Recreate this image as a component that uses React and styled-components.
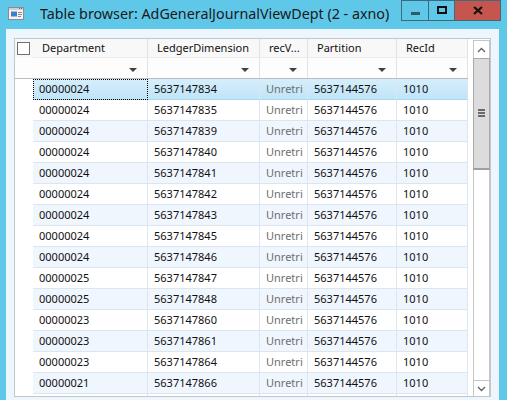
import styled, { createGlobalStyle } from "styled-components";

const GlobalStyle = createGlobalStyle`
  html, body {
    margin: 0;
    padding: 0;
    background: #5fc8e9;
  }
  * {
    box-sizing: border-box;
  }
`;

const Window = styled.div`
  width: 507px;
  height: 400px;
  background: #5fc8e9;
  display: flex;
  flex-direction: column;
  font-family: "Noto Sans", "Open Sans", sans-serif;
  overflow: hidden;
`;

const TitleBar = styled.div`
  height: 29px;
  display: flex;
  align-items: flex-start;
  padding: 0 6px 0 8px;
  flex-shrink: 0;
`;

const TitleIcon = styled.svg`
  margin-top: 7px;
  flex-shrink: 0;
`;

const Title = styled.div`
  margin-left: 16px;
  margin-top: 4px;
  font-size: 14.3px;
  color: #1a1a1a;
  white-space: nowrap;
  flex: 1;
`;

const Controls = styled.div`
  display: flex;
  height: 21px;
`;

const ControlButton = styled.div`
  width: ${(p) => p.$w}px;
  height: 21px;
  border: 1px solid #3d6b7b;
  border-left-width: ${(p) => (p.$first ? 1 : 0)}px;
  background: ${(p) => p.$bg || "transparent"};
  display: flex;
  align-items: center;
  justify-content: center;
`;

const MinGlyph = styled.div`
  width: 9px;
  height: 3px;
  margin-top: 5px;
  background: #2c5b6d;
`;

const MaxGlyph = styled.div`
  width: 10px;
  height: 8px;
  border: 2px solid #111;
  margin-top: -1px;
`;

const Content = styled.div`
  flex: 1;
  min-height: 0;
  margin: 0 8px 0 6px;
  background: #eef6fd;
  padding: 9px 8px 3px 8px;
  display: flex;
`;

const Grid = styled.div`
  flex: 1;
  min-height: 0;
  border: 1px solid #c3c7cc;
  background: #fff;
  display: flex;
  overflow: hidden;
`;

const TableArea = styled.div`
  width: 454px;
  overflow: hidden;
  display: flex;
  flex-direction: column;
`;

const cols = "18px 115px 112px 48px 89px 71px";

const HeaderRow = styled.div`
  display: grid;
  grid-template-columns: ${cols};
  height: 19px;
  background: #f8f8f8;
  flex-shrink: 0;
`;

const FilterRow = styled.div`
  display: grid;
  grid-template-columns: ${cols};
  height: 21px;
  background: #fdfdfd;
  border-bottom: 1px solid #b9bcc0;
  flex-shrink: 0;
`;

const Corner = styled.div`
  padding: 3px 0 0 2px;
`;

const CheckBox = styled.div`
  width: 13px;
  height: 13px;
  border: 1px solid #707070;
  background: #fff;
`;

const HeaderCell = styled.div`
  border-right: 1px solid #e3e3e3;
  border-bottom: 1px solid #ececec;
  font-size: 11px;
  line-height: 18px;
  padding-left: 9px;
  color: #111;
  white-space: nowrap;
  overflow: hidden;
`;

const FilterCell = styled.div`
  border-right: 1px solid #e3e3e3;
  position: relative;
`;

const DropArrow = styled.div`
  position: absolute;
  right: 10px;
  top: 10px;
  width: 0;
  height: 0;
  border-left: 4px solid transparent;
  border-right: 4px solid transparent;
  border-top: 4px solid #404040;
`;

const DataRow = styled.div`
  display: grid;
  grid-template-columns: ${cols};
  height: 21px;
  flex-shrink: 0;
`;

const RowHead = styled.div`
  background: #fff;
`;

const Cell = styled.div`
  font-size: 11px;
  line-height: 19px;
  padding-left: 6px;
  white-space: nowrap;
  overflow: hidden;
  color: ${(p) => (p.$muted ? "#6e6e6e" : "#111")};
  border-right: 1px solid #dbe6f1;
  border-bottom: 1px solid ${(p) => (p.$sel ? "#a9d8f3" : "#dbe6f1")};
  background: ${(p) =>
    p.$sel
      ? "linear-gradient(#d6eefc, #c0e4f8)"
      : p.$alt
      ? "#f0f6fe"
      : "#fff"};
  ${(p) => p.$focus && "outline: 1px dotted #000; outline-offset: -1px;"}
`;

const Scrollbar = styled.div`
  width: 17px;
  margin: 1px 0 0 5px;
  border: 1px solid #c6c6c6;
  border-bottom: none;
  display: flex;
  flex-direction: column;
  background: #fff;
`;

const ScrollButton = styled.div`
  height: ${(p) => p.$h}px;
  display: flex;
  align-items: center;
  justify-content: center;
  background: #fff;
  border-top: ${(p) => (p.$bottom ? "1px solid #c6c6c6" : "none")};
  flex-shrink: 0;
`;

const Thumb = styled.div`
  height: 112px;
  background: #dcdcdc;
  border-top: 1px solid #a9a9a9;
  border-bottom: 2px solid #a0a0a0;
  margin: 0 -1px;
  border-left: 1px solid #a9a9a9;
  border-right: 1px solid #a9a9a9;
  display: flex;
  flex-direction: column;
  align-items: center;
  padding-top: 50px;
  gap: 1px;
`;

const Grip = styled.div`
  width: 7px;
  height: 2px;
  background: #6a6a6a;
`;

const Track = styled.div`
  flex: 1;
`;

const ledgers = [
  "5637147834", "5637147835", "5637147839", "5637147840", "5637147841",
  "5637147842", "5637147843", "5637147845", "5637147846", "5637147847",
  "5637147848", "5637147860", "5637147861", "5637147864", "5637147866",
];
const depts = [
  "00000024", "00000024", "00000024", "00000024", "00000024", "00000024",
  "00000024", "00000024", "00000024", "00000025", "00000025", "00000023",
  "00000023", "00000023", "00000021",
];

const rows = ledgers.map((l, i) => ({
  dept: depts[i],
  ledger: l,
  rec: "Unretri",
  partition: "5637144576",
  recId: "1010",
}));

// the next row peeks in under the last full one, only its top edge shows
rows.push({ dept: "", ledger: "", rec: "", partition: "", recId: "" });

const headers = ["Department", "LedgerDimension", "recV...", "Partition", "RecId"];

export default function App() {
  return (
    <>
      <GlobalStyle />
      <Window>
        <TitleBar>
          <TitleIcon width="16" height="13" viewBox="0 0 16 13">
            <rect x="0.5" y="0.5" width="15" height="12" fill="#f4f4f4" stroke="#8c8c8c" />
            <rect x="1" y="1" width="14" height="2" fill="#d0d0d0" />
            <rect x="11" y="1" width="1" height="1" fill="#666" />
            <rect x="13" y="1" width="1" height="1" fill="#666" />
            <rect x="3" y="4.5" width="6" height="5" fill="#3b7fd0" />
            <rect x="10" y="5" width="4" height="1" fill="#8a8a8a" />
            <rect x="10" y="7" width="4" height="1" fill="#8a8a8a" />
            <rect x="10" y="9" width="3" height="1" fill="#8a8a8a" />
          </TitleIcon>
          <Title>Table browser: AdGeneralJournalViewDept (2 - axno)</Title>
          <Controls>
            <ControlButton $w={28} $first>
              <MinGlyph />
            </ControlButton>
            <ControlButton $w={26}>
              <MaxGlyph />
            </ControlButton>
            <ControlButton $w={46} $bg="#c6554d">
              <svg width="10" height="9" viewBox="0 0 10 9">
                <path d="M1 1 L9 8 M9 1 L1 8" stroke="#111" strokeWidth="2.2" />
              </svg>
            </ControlButton>
          </Controls>
        </TitleBar>
        <Content>
          <Grid>
            <TableArea>
              <HeaderRow>
                <Corner>
                  <CheckBox />
                </Corner>
                {headers.map((h) => (
                  <HeaderCell key={h}>{h}</HeaderCell>
                ))}
              </HeaderRow>
              <FilterRow>
                <div />
                {headers.map((h) => (
                  <FilterCell key={h}>
                    <DropArrow />
                  </FilterCell>
                ))}
              </FilterRow>
              {rows.map((r, i) => {
                const sel = i === 0;
                const alt = i % 2 === 0;
                return (
                  <DataRow key={i}>
                    <RowHead />
                    <Cell $sel={sel} $alt={alt} $focus={sel}>{r.dept}</Cell>
                    <Cell $sel={sel} $alt={alt}>{r.ledger}</Cell>
                    <Cell $sel={sel} $alt={alt} $muted>{r.rec}</Cell>
                    <Cell $sel={sel} $alt={alt}>{r.partition}</Cell>
                    <Cell $sel={sel} $alt={alt}>{r.recId}</Cell>
                  </DataRow>
                );
              })}
            </TableArea>
            <Scrollbar>
              <ScrollButton $h={17}>
                <svg width="9" height="6" viewBox="0 0 9 6">
                  <path d="M1 5 L4.5 1.5 L8 5" fill="none" stroke="#606060" strokeWidth="1.3" />
                </svg>
              </ScrollButton>
              <Thumb>
                <Grip />
                <Grip />
                <Grip />
              </Thumb>
              <Track />
              <ScrollButton $h={16} $bottom>
                <svg width="9" height="6" viewBox="0 0 9 6">
                  <path d="M1 1 L4.5 4.5 L8 1" fill="none" stroke="#606060" strokeWidth="1.3" />
                </svg>
              </ScrollButton>
            </Scrollbar>
          </Grid>
        </Content>
      </Window>
    </>
  );
}
